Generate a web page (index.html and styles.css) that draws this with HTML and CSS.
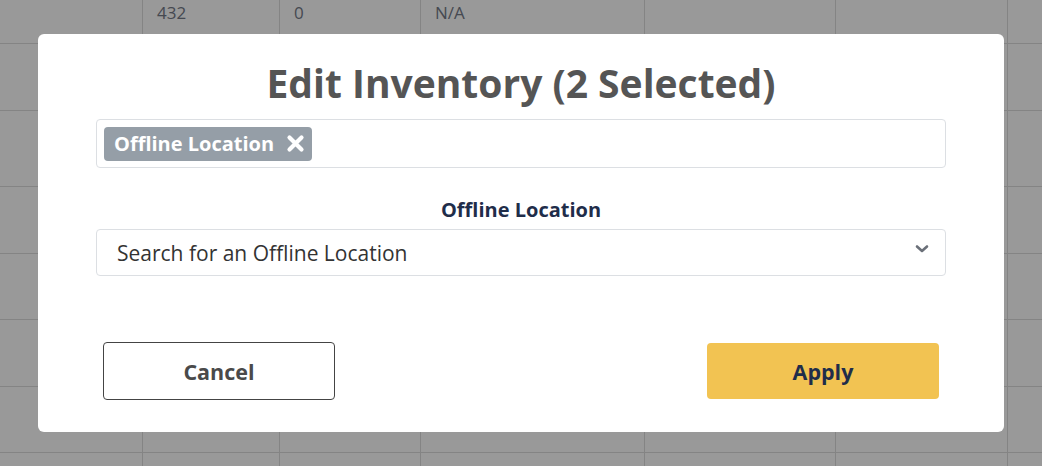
FILE: index.html
```html
<!DOCTYPE html>
<html>
<head>
<meta charset="utf-8">
<link rel="stylesheet" href="styles.css">
</head>
<body>
<div class="table">
  <div class="row r1"><div class="c"></div><div class="c">432</div><div class="c">0</div><div class="c">N/A</div><div class="c"></div><div class="c"></div><div class="c"></div></div>
  <div class="row r2"><div class="c"></div><div class="c"></div><div class="c"></div><div class="c"></div><div class="c"></div><div class="c"></div><div class="c"></div></div>
  <div class="row r3"><div class="c"></div><div class="c"></div><div class="c"></div><div class="c"></div><div class="c"></div><div class="c"></div><div class="c"></div></div>
  <div class="row r2"><div class="c"></div><div class="c"></div><div class="c"></div><div class="c"></div><div class="c"></div><div class="c"></div><div class="c"></div></div>
  <div class="row r4"><div class="c"></div><div class="c"></div><div class="c"></div><div class="c"></div><div class="c"></div><div class="c"></div><div class="c"></div></div>
  <div class="row r2"><div class="c"></div><div class="c"></div><div class="c"></div><div class="c"></div><div class="c"></div><div class="c"></div><div class="c"></div></div>
  <div class="row r4"><div class="c"></div><div class="c"></div><div class="c"></div><div class="c"></div><div class="c"></div><div class="c"></div><div class="c"></div></div>
  <div class="row r2"><div class="c"></div><div class="c"></div><div class="c"></div><div class="c"></div><div class="c"></div><div class="c"></div><div class="c"></div></div>
</div>
<div class="overlay"></div>
<div class="modal">
  <h1 class="title">Edit Inventory (2 Selected)</h1>
  <div class="tag-box">
    <span class="tag">Offline Location
      <svg class="tag-x" width="19" height="19" viewBox="0 0 19 19"><path d="M3.5 3.5 L15.5 15.5 M15.5 3.5 L3.5 15.5" stroke="#fff" stroke-width="4.2" stroke-linecap="round"/></svg>
    </span>
  </div>
  <div class="field">
    <label class="label">Offline Location</label>
    <div class="select">
      <span class="placeholder">Search for an Offline Location</span>
      <svg class="chev" width="14" height="10" viewBox="0 0 14 10"><path d="M2 2.5 L7 7 L12 2.5" fill="none" stroke="#6b7079" stroke-width="2.6" stroke-linecap="round" stroke-linejoin="round"/></svg>
    </div>
  </div>
  <div class="actions">
    <button class="btn cancel">Cancel</button>
    <button class="btn apply">Apply</button>
  </div>
</div>
</body>
</html>
```
FILE: styles.css
```css
* { box-sizing: border-box; }
html, body { margin: 0; padding: 0; }
body {
  width: 1042px;
  height: 466px;
  overflow: hidden;
  background: #fff;
  font-family: "Open Sans", "Noto Sans", sans-serif;
  position: relative;
}
.table { display: flex; flex-direction: column; height: 466px; overflow: hidden; }
.row {
  flex: none;
  display: grid;
  grid-template-columns: 143px 137px 141px 224px 191px 172px 1fr;
  border-bottom: 1px solid #dcdcdc;
}
.r1 { height: 44px; }
.r2 { height: 67px; }
.r3 { height: 76px; }
.r4 { height: 66px; }
.c {
  border-right: 1px solid #dcdcdc;
  padding: 1px 14px 0;
  font-size: 17px;
  color: #747a88;
  line-height: 24px;
}
.c:last-child { border-right: none; }
.overlay {
  position: absolute;
  inset: 0;
  background: rgba(0, 0, 0, 0.4);
}
.modal {
  position: absolute;
  left: 38px;
  top: 34px;
  width: 966px;
  height: 398px;
  background: #fff;
  border-radius: 6px;
  padding: 23px 58px 0;
  display: flex;
  flex-direction: column;
}
.title {
  margin: 0;
  text-align: center;
  font-size: 39px;
  line-height: 52px;
  font-weight: 700;
  color: #555555;
}
.tag-box {
  margin-top: 10px;
  height: 49px;
  border: 1px solid #dcdfe3;
  border-radius: 4px;
  padding: 6px 7px;
  display: flex;
  align-items: center;
}
.tag {
  height: 34px;
  background: #959ea7;
  color: #fff;
  font-weight: 700;
  font-size: 20px;
  border-radius: 4px;
  padding: 0 7px 0 10px;
  display: inline-flex;
  align-items: center;
  gap: 12px;
}
.tag-x { flex: none; }
.field {
  margin-top: 29px;
  display: flex;
  flex-direction: column;
}
.label {
  text-align: center;
  font-size: 20px;
  font-weight: 700;
  color: #1f2d4a;
  line-height: 26px;
  margin-bottom: 6px;
}
.select {
  height: 47px;
  border: 1px solid #dcdfe3;
  border-radius: 4px;
  padding: 0 16px 0 20px;
  display: flex;
  align-items: center;
  justify-content: space-between;
}
.placeholder {
  font-size: 21px;
  color: #333;
}
.chev { margin-top: -7px; }
.actions {
  margin-top: 66px;
  display: flex;
  justify-content: space-between;
  padding: 0 7px;
}
.btn {
  width: 232px;
  height: 58px;
  border-radius: 4px;
  font-family: "Open Sans", "Noto Sans", sans-serif;
  font-weight: 700;
  font-size: 21.5px;
  cursor: pointer;
}
.cancel {
  background: #fff;
  border: 1px solid #444;
  color: #4a4a4a;
}
.apply {
  height: 56px;
  margin-top: 1px;
  background: #f2c352;
  border: none;
  color: #1f2d4a;
}
```
